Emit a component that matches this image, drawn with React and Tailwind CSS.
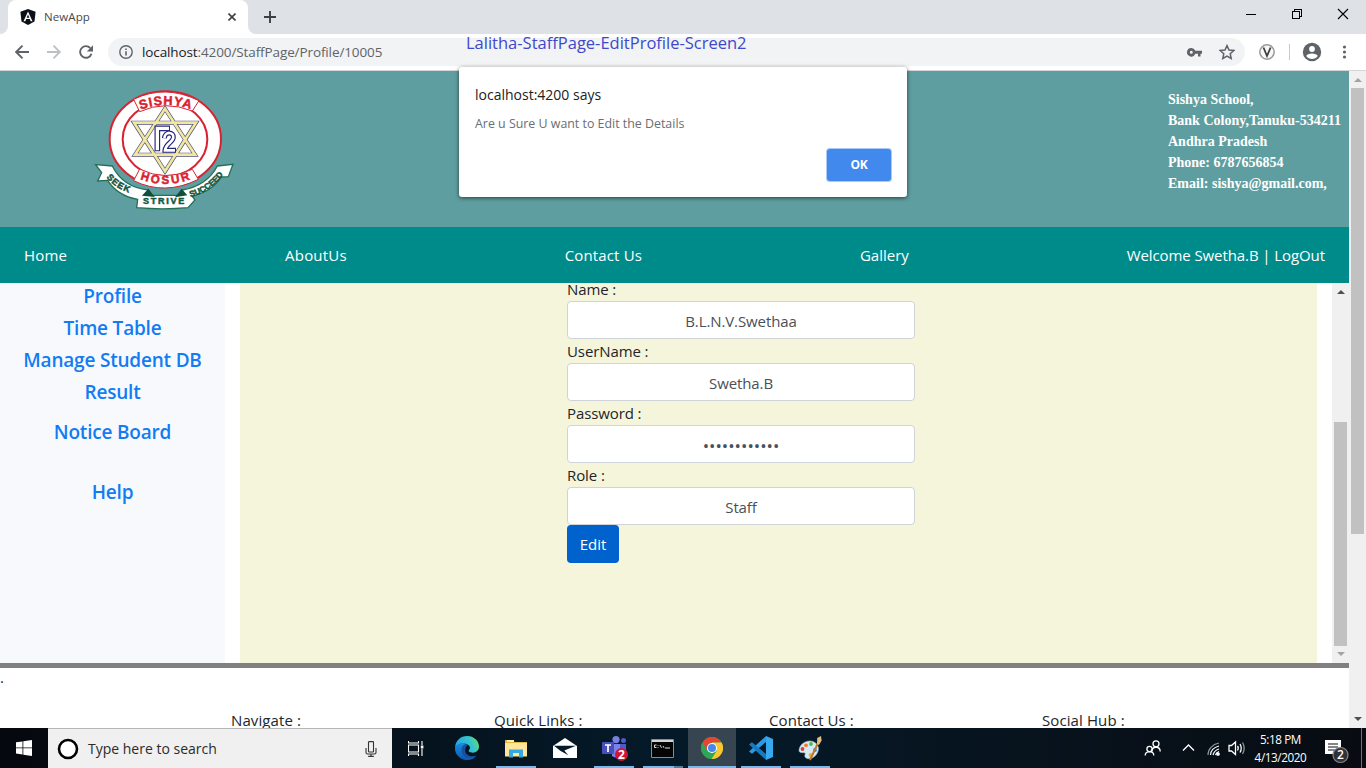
const fields = [
  { label: "Name :", value: "B.L.N.V.Swethaa" },
  { label: "UserName :", value: "Swetha.B" },
  { label: "Password :", value: "••••••••••••", masked: true },
  { label: "Role :", value: "Staff" },
];

function TabStrip() {
  return (
    <div className="flex h-[34px] shrink-0 bg-[#dee1e6]">
      <div className="relative ml-2 flex h-[34px] w-[240px] items-center rounded-t-lg bg-white pl-3">
        <svg className="absolute -left-2 bottom-0 h-2 w-2" viewBox="0 0 8 8">
          <path d="M8 0v8H0A8 8 0 0 0 8 0" fill="#fff" />
        </svg>
        <svg className="absolute -right-2 bottom-0 h-2 w-2" viewBox="0 0 8 8">
          <path d="M0 0v8h8A8 8 0 0 1 0 0" fill="#fff" />
        </svg>
        <svg className="h-4 w-4" viewBox="0 0 16 16">
          <path d="M8 0l7.6 2.7-1.1 9.8L8 16l-6.5-3.5L.4 2.7z" fill="#0b1018" />
          <path d="M8 2.4L3.5 12.3h1.8l.9-2.2h3.6l.9 2.2h1.8zM8 5.6l1.3 3.1H6.7z" fill="#fff" fillRule="evenodd" />
        </svg>
        <span className="ml-2 flex-1 text-[11.5px] tracking-[0.1px] text-[#45494d]">NewApp</span>
        <svg className="mr-3 h-2 w-2" viewBox="0 0 8 8">
          <path d="M.5.5l7 7M7.5.5l-7 7" stroke="#3c4043" strokeWidth="1.6" />
        </svg>
      </div>
      <svg className="mt-[11px] ml-4 h-3 w-3" viewBox="0 0 12 12">
        <path d="M6 0v12M0 6h12" stroke="#3c4043" strokeWidth="1.9" />
      </svg>
      <div className="ml-auto flex pt-2 pr-[17px]">
        <svg className="h-3 w-[103px]" viewBox="0 0 103 12" fill="none" stroke="#000" shapeRendering="crispEdges">
          <path d="M0 6.5h10M46.500 3.500h7v7h-7zM48.500 3.500v-2h7v7h-2" />
          <path d="M92 1l10 10M102 1L92 11" shapeRendering="auto" strokeWidth="1.100" />
        </svg>
      </div>
    </div>
  );
}

function Toolbar() {
  return (
    <div className="flex h-[36px] shrink-0 items-center bg-white">
      <svg className="ml-[15px] h-[14px] w-[79px]" viewBox="0 0 79 14" fill="none" strokeWidth="1.9">
        <path d="M14 7H1M7.500 .7L1.200 7l6.300 6.300" stroke="#5f6368" />
        <path d="M32 7h13M38.500 .7L44.800 7l-6.300 6.300" stroke="#bdc1c6" />
        <path d="M75.200 3A5.800 5.800 0 1 0 76.500 8.700" stroke="#5f6368" />
        <path d="M78 .2v6.200h-6.200z" fill="#5f6368" />
      </svg>
      <div className="ml-[14px] flex h-7 w-[1137px] items-center rounded-full bg-[#f1f3f4] pl-[11px]">
        <svg className="h-[14px] w-[14px]" viewBox="0 0 14 14">
          <circle cx="7" cy="7" r="6.200" fill="none" stroke="#5f6368" strokeWidth="1.400" />
          <path d="M7 6.200v4.300M7 3.400v1.600" stroke="#5f6368" strokeWidth="1.600" />
        </svg>
        <span className="ml-[9px] flex-1 text-[13.5px] tracking-[-0.11px] text-[#5f6368]">
          <span className="text-[#202124]">localhost</span>:4200/StaffPage/Profile/10005
        </span>
        <svg className="h-[9px] w-[15px]" viewBox="0 0 15 9">
          <path d="M4.300 0a4.300 4.300 0 1 0 4 5.800H11V8.500h2.500V5.800H15V2.800H8.300A4.300 4.300 0 0 0 4.300 0m0 2.800a1.500 1.500 0 1 1 0 3 1.500 1.500 0 0 1 0-3" fill="#5f6368" fillRule="evenodd" />
        </svg>
        <svg className="mr-[10px] ml-[17px] h-4 w-4" viewBox="0 0 16 16">
          <path d="M8 1.600l2 4.400 4.800.5-3.600 3.200 1 4.700L8 12l-4.200 2.400 1-4.700L1.200 6.500 6 6z" fill="none" stroke="#5f6368" strokeWidth="1.500" />
        </svg>
      </div>
      <svg className="ml-[14px] h-5 w-[92px]" viewBox="0 0 92 20">
        <circle cx="8" cy="10" r="7.200" fill="#f7f7f7" stroke="#999" strokeWidth="1.500" />
        <path d="M4.500 5.500L8 14l3.600-8.500" fill="none" stroke="#3f3f3f" strokeWidth="1.800" />
        <path d="M30.500 2v16" stroke="#c9cccf" />
        <circle cx="53" cy="10" r="9.200" fill="#5f6368" />
        <circle cx="53" cy="7" r="2.900" fill="#fff" />
        <path d="M47.200 14c1-3.400 10.600-3.400 11.600 0a7 7 0 0 1-11.600 0" fill="#fff" />
        <g fill="#5f6368"><circle cx="85.500" cy="5" r="1.600" /><circle cx="85.500" cy="10" r="1.600" /><circle cx="85.500" cy="15" r="1.600" /></g>
      </svg>
    </div>
  );
}

function SchoolLogo() {
  return (
    <svg className="mt-[9px] ml-[85px] h-[140px] w-[160px]" viewBox="0 0 480 420" fontFamily="Liberation Sans, sans-serif" fontWeight="bold">
      <defs>
        <path id="arcTop" d="M146 97Q240 54 336 95" />
        <path id="arcBottom" d="M146 289Q240 334 338 289" />
        <path id="arcSeek" d="M64 292Q95 330 150 344" />
        <path id="arcSucceed" d="M316 351Q375 338 418 279" />
      </defs>
      <path d="M32 254L82 258C105 305 145 325 190 330L198 346H284L292 330C340 322 375 300 397 258L444 253L430 290L408 291C395 315 365 337 322 349L330 360L309 383Q235 390 155 383L158 358C115 350 85 328 68 301L38 303L50 278Z" fill="#fff" stroke="#237058" strokeWidth="4" />
      <path d="M176 345L190 330L204 348ZM276 348L290 330L302 344Z" fill="#124f3b" stroke="#124f3b" strokeWidth="5" />
      <ellipse cx="241" cy="177" rx="167" ry="143" fill="#fff" stroke="#d92231" strokeWidth="6" />
      <ellipse cx="240" cy="178" rx="127" ry="112" fill="none" stroke="#d92231" strokeWidth="6" />
      <path d="M146 58L164 95Q240 60 322 93L342 62Q240 12 146 58M146 302L164 267Q240 306 322 268L340 298Q240 348 146 302" fill="#fff" stroke="#d92231" strokeWidth="3" />
      <g fill="none" strokeLinejoin="miter">
        <path d="M240 86L330 224H150ZM240 274L333 128H147Z" stroke="#55517b" strokeWidth="12" />
        <path d="M240 86L330 224H150ZM240 274L333 128H147Z" stroke="#efe8a0" strokeWidth="8" />
        <path d="M217 214V145H255" stroke="#28267d" strokeWidth="17" />
        <path d="M217 211V145H252" stroke="#fff" strokeWidth="10" />
        <path d="M238 175C240 153 267 155 265 173C264 187 242 190 240 211H273" stroke="#28267d" strokeWidth="15" />
        <path d="M238 174C240 153 267 155 265 173C264 187 242 190 240 211H270" stroke="#fff" strokeWidth="8" />
      </g>
      <g fill="#d92231" stroke="#d92231" strokeWidth="1.500" fontSize="38" textAnchor="middle">
        <text letterSpacing="3"><textPath href="#arcTop" startOffset="51%">SISHYA</textPath></text>
        <text fontSize="35" letterSpacing="7"><textPath href="#arcBottom" startOffset="51%">HOSUR</textPath></text>
      </g>
      <g fill="#145743" fontSize="27" stroke="#145743" strokeWidth="1.500">
        <text letterSpacing="3"><textPath href="#arcSeek">SEEK</textPath></text>
        <text x="174" y="373" textLength="124">STRIVE</text>
        <text fontSize="25"><textPath href="#arcSucceed">SUCCEED</textPath></text>
      </g>
    </svg>
  );
}

function Arrow({ up, dim }) {
  return (
    <svg className="h-[4px] w-[8px] shrink-0" viewBox="0 0 8 4">
      <path d={up ? "M0 4L4 0l4 4z" : "M0 0l4 4 4-4z"} fill={dim ? "#a3a3a3" : "#505050"} />
    </svg>
  );
}

function SchoolHeader() {
  return (
    <header className="flex h-[156px] shrink-0 justify-between bg-[#5f9ea0]">
      <SchoolLogo />
      <address className="w-[181px] pt-[18px] font-['Liberation_Serif',serif] text-[14px] leading-[21px] font-bold whitespace-nowrap text-white not-italic">
        <div>Sishya School,</div>
        <div>Bank Colony,Tanuku-534211</div>
        <div>Andhra Pradesh</div>
        <div>Phone: 6787656854</div>
        <div>Email: sishya@gmail.com,</div>
      </address>
    </header>
  );
}

function Page() {
  return (
    <div className="flex h-[657px] w-[1349px] shrink-0 flex-col overflow-hidden bg-white">
      <SchoolHeader />
      <nav className="flex h-14 shrink-0 items-center justify-between bg-[#008b8b] px-6 text-[15px] text-white">
        <span className="tracking-[0.2px]">Home</span>
        <span className="tracking-[0.2px]">AboutUs</span>
        <span className="tracking-[0.15px]">Contact Us</span>
        <span>Gallery</span>
        <span className="tracking-[-0.09px]">Welcome Swetha.B | LogOut</span>
      </nav>
      <main className="flex h-[380px] shrink-0 overflow-hidden">
        <aside className="flex w-[225px] flex-col items-center bg-[#f8f9fc] text-[19px] leading-8 font-semibold tracking-[-0.2px] text-[#117cf4]">
          <span className="-mt-[3px]">Profile</span>
          <span>Time Table</span>
          <span>Manage Student DB</span>
          <span>Result</span>
          <span className="mt-2">Notice Board</span>
          <span className="mt-7">Help</span>
        </aside>
        <section className="ml-[15px] w-[1077px] bg-[#f5f5dc]">
          <form className="-mt-[6px] ml-[327px] w-[348px] text-[15px] text-[#212529]">
            {fields.map((f) => (
              <div key={f.label}>
                <label className="block h-6 leading-[25px] tracking-[-0.1px]">{f.label}</label>
                <div className={"flex h-[38px] items-center justify-center rounded border border-[#ced4da] bg-white pt-[3px] text-[#495057] " + (f.masked ? "text-[17px]" : "tracking-[-0.1px]")}>
                  {f.value}
                </div>
              </div>
            ))}
            <button type="button" className="block h-[38px] w-[52px] rounded bg-[#0062cc] text-white">Edit</button>
          </form>
        </section>
        <div className="ml-[15px] flex w-[17px] flex-col items-center bg-[#f0f0f0] pt-[7px] pb-[7px]">
          <Arrow up />
          <div className="mt-[128px] h-[224px] w-[13px] bg-[#c1c1c1]" />
          <div className="mt-auto flex"><Arrow dim /></div>
        </div>
      </main>
      <footer className="shrink-0 border-t-[5px] border-[#808080] text-[15px] text-[#212529]">
        <div className="h-10 leading-[18px]">.</div>
        <div className="flex pl-[231px] leading-6 tracking-[0.1px]">
          <span className="w-[263px]">Navigate :</span>
          <span className="w-[275px]">Quick Links :</span>
          <span className="w-[273px]">Contact Us :</span>
          <span>Social Hub :</span>
        </div>
      </footer>
    </div>
  );
}

function Dialog() {
  return (
    <div className="absolute top-[67px] left-[459px] flex h-[130px] w-[448px] flex-col rounded-[3px] bg-white px-4 pt-[17px] shadow-[0_1px_4px_rgba(0,0,0,0.6)]">
      <div className="text-[14px] leading-[22px] text-[#202124]">localhost:4200 says</div>
      <div className="mt-[8px] text-[12.4px] leading-5 text-[#6a6e73]">Are u Sure U want to Edit the Details</div>
      <button type="button" className="mt-[15px] h-8 w-16 self-end rounded-[3px] bg-[#4189ec] text-[12px] font-bold tracking-[-0.3px] text-white shadow-[0_0_0_1px_#a9c9f7]">OK</button>
    </div>
  );
}

function TaskCell({ children, bar, active, half }) {
  return (
    <div className={"flex h-10 w-12 shrink-0 flex-col items-center " + (active ? "bg-[#36454f]" : "")}>
      <div className="flex h-[38px] items-center pt-[2px]">{children}</div>
      {bar && (
        <div className={"flex h-[2px] " + (active ? "w-12" : "w-10")}>
          <div className="flex-1 bg-[#76b9ed]" />
          {half && <div className="w-[9px] bg-[#4f7f9f]" />}
        </div>
      )}
    </div>
  );
}

function Taskbar() {
  return (
    <div className="flex h-10 shrink-0 bg-linear-to-r from-[#05080e] via-[#041a29] to-[#080c12] text-white">
      <div className="flex w-12 items-center justify-center">
        <svg className="h-4 w-4" viewBox="0 0 16 16"><path d="M0 2.300L6.500 1.400V7.500H0zM7.300 1.300L16 0v7.500H7.300zM0 8.300h6.500v6.200L0 13.600zM7.300 8.300H16V16l-8.700-1.300z" fill="#fff" /></svg>
      </div>
      <div className="flex w-[344px] items-center border-t border-[#b5b5b5] bg-[#f0f0f0] pl-[9px] text-[14px] text-[#2b2b2b]">
        <svg className="h-[22px] w-[22px]" viewBox="0 0 22 22"><circle cx="11" cy="11" r="9" fill="#fff" stroke="#000" strokeWidth="2.600" /></svg>
        <span className="ml-[9px] flex-1">Type here to search</span>
        <svg className="mr-[15px] h-4 w-3" viewBox="0 0 12 16" fill="none" stroke="#333" strokeWidth="1.100"><rect x="3.500" y=".6" width="5" height="10.400" rx=".6" /><path d="M1 7v4.500q0 1.500 1.500 1.500h7q1.500 0 1.500-1.500V7M6 13v2.400M3.200 15.400h5.600" /></svg>
      </div>
      <div className="flex gap-px">
        <TaskCell>
          <svg className="h-[15px] w-4" viewBox="0 0 16 15" fill="none" stroke="#fff" strokeWidth="1.100"><path d="M.5 0v2h10V0M.5 4h10v7H.5zM.5 15v-2h10v2M14 0v4M14 8v7" /><path d="M12.800 4.500h2.600v3h-2.600z" fill="#fff" stroke="none" /></svg>
        </TaskCell>
        <div className="w-px" />
        <TaskCell>
          <svg className="h-6 w-6" viewBox="0 0 24 24">
            <defs>
              <linearGradient id="edgeA" x1="0" x2="1" y1=".3" y2="0"><stop stopColor="#23a9e8" /><stop offset=".55" stopColor="#32c3d0" /><stop offset="1" stopColor="#6ee05b" /></linearGradient>
              <linearGradient id="edgeB" x1="0" x2="0" y1="0" y2="1"><stop stopColor="#168ee3" /><stop offset="1" stopColor="#0c57b0" /></linearGradient>
            </defs>
            <path d="M0 11.500C.6 4.600 5.500 0 12.200 0 19 0 24 5 24 10.600c0 4-3 6.100-6.200 6.100-3.400 0-4.400-1.300-4.100-2.100 1.900-1.900 1.600-4.100-.2-5.500C9.800 6.200 3 7 0 11.500" fill="url(#edgeA)" />
            <path d="M0 11.500C2.300 7.500 8 5.800 12 8c-4 .6-6 5-4.200 9 2 4.200 7.400 5.500 13.600 2.400C17.500 25.200 9.200 25.500 4 21 1 18.300-.2 15 0 11.500" fill="url(#edgeB)" />
            <path d="M12 8C7 8.600 5.600 13 7 17c2 5.400 9 6 14.400 2.400-3.700 1.600-9.900 1-11-3.900-.6-2.900.7-5 2.300-6.600" fill="#174f9e" />
          </svg>
        </TaskCell>
        <TaskCell bar>
          <svg className="h-[19px] w-[22px]" viewBox="0 0 22 19"><path d="M0 1h8l1.500 2H22v14H0z" fill="#e4b943" /><path d="M2 1h7v2H2z" fill="#fff0aa" /><path d="M0 4h22v13.500H0z" fill="#ffe69a" /><path d="M4 18.500V10.500h14v8h-4V14H8v4.500z" fill="#35a9df" /></svg>
        </TaskCell>
        <TaskCell>
          <svg className="h-5 w-6" viewBox="0 0 24 20"><path d="M0 8L12 0l12 8v12H0z" fill="#fff" /><path d="M1 7.700h22L11.300 12.600l4 4.600-8-4.400z" fill="#051a28" /></svg>
        </TaskCell>
        <TaskCell bar>
          <svg className="mt-[2px] ml-[3px] h-[26px] w-[27px]" viewBox="0 0 27 26">
            <circle cx="14" cy="3.600" r="3.600" fill="#777fe0" /><circle cx="21.500" cy="4.500" r="2.500" fill="#5059c9" />
            <path d="M10 8h10v10q-4 6-10 2z" fill="#7b83eb" /><path d="M18 8h6v8q-2 4-6 3z" fill="#5059c9" />
            <rect y="6" width="12" height="12" rx="1" fill="#4650b8" /><path d="M3 9h6M6 9v7" stroke="#fff" strokeWidth="1.700" />
            <circle cx="19.500" cy="18.500" r="6.500" fill="#ce1733" />
            <text x="19.500" y="22.700" fill="#fff" fontSize="12" fontWeight="bold" textAnchor="middle">2</text>
          </svg>
        </TaskCell>
        <TaskCell bar half>
          <svg className="mr-[2px] h-[19px] w-[23px]" viewBox="0 0 23 19"><path d="M.5.5h22v18H.5z" fill="#050505" stroke="#8b8b8b" /><path d="M1 1h21v2H1z" fill="#d4d4d4" /><path d="M5.500 6H3.500v2.500h2M7 6v.7M7 8v.7M9 6l1.500 2.800M12 7l1 1.800M14 9h5" fill="none" stroke="#ddd" strokeWidth="1" /></svg>
        </TaskCell>
        <TaskCell bar active>
          <svg className="h-[22px] w-[22px]" viewBox="0 0 22 22"><circle cx="11" cy="11" r="11" fill="#2fa653" /><path d="M11 11L1.500 5.500A11 11 0 0 1 20.500 5.500H11z" fill="#e84436" /><path d="M20.500 5.500A11 11 0 0 1 10.500 22L15.800 13.700 11 5.500z" fill="#fbc72e" /><path d="M1.500 5.500L6.300 13.700 11 11V5.500z" fill="#e84436" /><path d="M1.500 5.500L6.300 13.700 11 16l-1 6A11 11 0 0 1 1.500 5.500" fill="#2fa653" /><circle cx="11" cy="11" r="5.100" fill="#fff" /><circle cx="11" cy="11" r="4" fill="#4587ef" /></svg>
        </TaskCell>
        <TaskCell bar>
          <svg className="h-6 w-6" viewBox="0 0 24 24"><path d="M17 0v6L3 17.800 0 15.500z" fill="#2b9ae6" /><path d="M3 6.200L17 18v6L0 8.500z" fill="#167abd" /><path d="M17 0l7 3v18l-7 3z" fill="#36a9f1" /></svg>
        </TaskCell>
        <TaskCell bar>
          <svg className="h-[25px] w-6" viewBox="0 0 24 25"><path d="M1 14C2 7 10 3 16 6c5 2.600 6 8 2 13-3 4-9 5-11 2-1-2 1-3 0-4-2-1-6 1-6-3" fill="#d7e9f4" stroke="#91b6ca" strokeWidth=".6" /><circle cx="4.500" cy="13" r="1.900" fill="#df3d34" /><circle cx="8" cy="9.300" r="1.900" fill="#ee7d2e" /><circle cx="13" cy="8" r="1.900" fill="#51b749" /><circle cx="17" cy="14" r="1.900" fill="#318bd3" /><circle cx="12.500" cy="19" r="1.900" fill="#eab32e" /><path d="M20.500 6L12 24" stroke="#bf762b" strokeWidth="2" /><path d="M19 8l.2-6L23 0l.6 4.500L21 9z" fill="#e2bd83" /></svg>
        </TaskCell>
      </div>
      <div className="ml-auto flex items-center pr-[4px]">
        <svg className="h-10 w-[108px]" viewBox="0 0 108 40" fill="none" stroke="#fff" strokeWidth="1.300">
          <circle cx="14" cy="15.800" r="3" /><path d="M9.800 24q0-4.500 4.200-5 4.200.5 4.200 4.500" /><circle cx="7.500" cy="21" r="2.600" /><path d="M3.200 27.500q0-3.500 4.300-3.800 4.300.3 4.300 3.800" />
          <path d="M41 22.500l5.500-5.500 5.500 5.500" />
          <g transform="translate(2 0)">
            <g strokeWidth="1.200"><path d="M64 27a14 12 0 0 1 11-12" stroke="#899" /><path d="M66.500 27a12 10 0 0 1 8.500-9M69 27a9 8 0 0 1 6-6M71.500 27a6 5 0 0 1 3.500-3.500" /></g><circle cx="74" cy="26" r="1.200" fill="#fff" />
            <path d="M85 17.500h2.500l4-3.500v12.500l-4-3.500H85zM93.500 18q1.500 2 0 4.500M96 16q2.500 4.300 0 8.500" /><path d="M98.500 14.500q3.500 5.700 0 11.500" stroke="#899" />
          </g>
        </svg>
        <div className="mr-[14px] w-[61px] text-center text-[11.7px] leading-[18px] tracking-[-0.4px]">
          <div>5:18 PM</div><div>4/13/2020</div>
        </div>
        <svg className="mr-[11px] h-10 w-[25px]" viewBox="0 0 25 40">
          <path d="M0 12h16v14h-4v4l-4-4H0z" fill="#fff" /><path d="M3 16h10M3 19h10M3 22h7" stroke="#080c12" strokeWidth="1.200" />
          <circle cx="15.500" cy="27" r="7.500" fill="#303236" stroke="#85878b" strokeWidth="1.200" />
          <text x="15.500" y="31.300" textAnchor="middle" fill="#fff" fontSize="12" fontWeight="600">2</text>
        </svg>
        <div className="h-10 w-px bg-[#6d7277]" />
      </div>
    </div>
  );
}

export default function App() {
  return (
    <div className="relative flex h-[768px] w-[1366px] flex-col overflow-hidden bg-white font-['Open_Sans','Noto_Sans',sans-serif] whitespace-nowrap">
      <TabStrip />
      <Toolbar />
      <div className="h-px shrink-0 bg-[#d3d6d8]" />
      <div className="flex h-[657px] shrink-0">
        <Page />
        <div className="flex w-[17px] flex-col items-center bg-[#f0f0f0] pt-[7px] pb-[7px]">
          <Arrow up dim />
          <div className="mt-[6px] h-[446px] w-[13px] bg-[#c1c1c1]" />
          <div className="mt-auto flex"><Arrow /></div>
        </div>
      </div>
      <Taskbar />
      <div className="absolute top-[31px] left-[466px] text-[16.5px] leading-6 text-[#3f48cc]">Lalitha-StaffPage-EditProfile-Screen2</div>
      <Dialog />
    </div>
  );
}
